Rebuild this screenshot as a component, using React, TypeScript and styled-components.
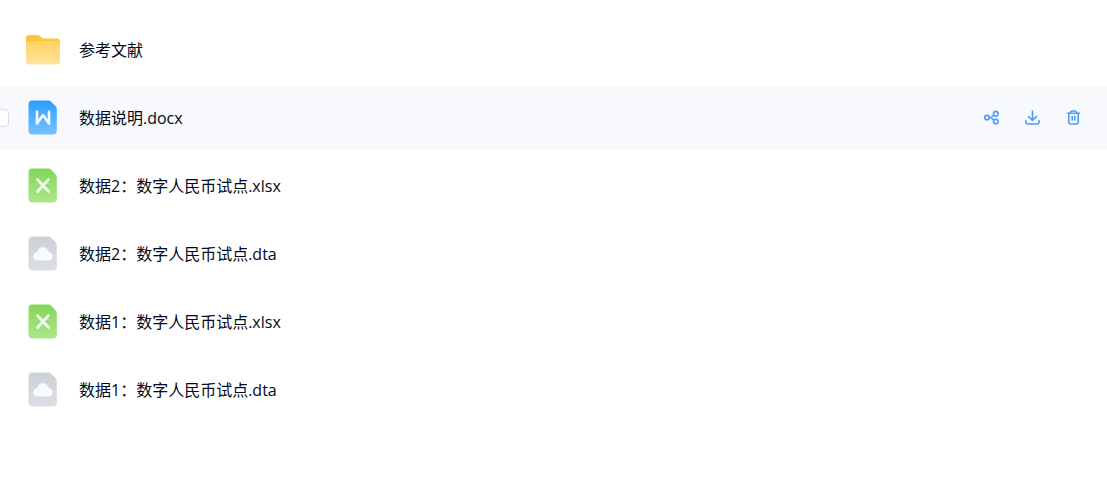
import React from "react";
import styled, { createGlobalStyle } from "styled-components";

const GlobalStyle = createGlobalStyle`
  *, *::before, *::after { box-sizing: border-box; }
  body {
    margin: 0;
    background: #fff;
    color: #03081a;
    overflow-x: hidden;
    font-family: "Open Sans", "Noto Sans CJK SC", sans-serif;
    font-size: 16px;
    line-height: 24px;
  }
`;

const FileList = styled.ul`
  display: flex;
  flex-direction: column;
  gap: 4px;
  margin: 0;
  padding: 18px 0;
  list-style: none;
  overflow: hidden;
`;

const Row = styled.li<{ $active: boolean }>`
  display: flex;
  align-items: center;
  height: 64px;
  padding-right: 24px;
  background: ${(p) => (p.$active ? "#f7f9fd" : "transparent")};
`;

const Tick = styled.input<{ $shown: boolean }>`
  appearance: none;
  flex: none;
  width: 18px;
  height: 18px;
  margin: 0 17px 0 -9px;
  border: 1px solid #dcdfe5;
  border-radius: 4px;
  background: #fff;
  visibility: ${(p) => (p.$shown ? "visible" : "hidden")};
`;

const Entry = styled.label`
  display: flex;
  flex: 1;
  align-items: center;
  gap: 19px;
  min-width: 0;
`;

const FileIcon = styled.svg`
  flex: none;
  display: block;
  width: 34px;
  height: 36px;
`;

const Name = styled.span`
  overflow: hidden;
  white-space: nowrap;
  text-overflow: ellipsis;
`;

const Actions = styled.div`
  display: flex;
  gap: 23px;
`;

const ActionButton = styled.button`
  width: 18px;
  height: 18px;
  padding: 0;
  border: 0;
  background: none;
  color: #4a9bfa;
  cursor: pointer;

  svg {
    display: block;
    width: 18px;
    height: 18px;
    fill: none;
    stroke: currentColor;
    stroke-width: 1.6;
    stroke-linecap: round;
    stroke-linejoin: round;
  }
`;

type Kind = "folder" | "docx" | "xlsx" | "dta";

const gradients: Record<Kind, [string, string]> = {
  folder: ["#ffd162", "#ffe49c"],
  docx: ["#2a9fff", "#78c1ff"],
  xlsx: ["#82d658", "#ade68c"],
  dta: ["#cdd1d8", "#dcdfe4"],
};

function KindIcon({ kind }: { kind: Kind }) {
  const id = React.useId();
  const [top, bottom] = gradients[kind];
  return (
    <FileIcon viewBox="0 0 34 36" aria-hidden="true">
      <defs>
        <linearGradient id={id} x1="0" y1="0" x2="0" y2="1">
          <stop offset="0" stopColor={top} />
          <stop offset="1" stopColor={bottom} />
        </linearGradient>
      </defs>
      {kind === "folder" ? (
        <>
          <path
            d="M0 16V6a3 3 0 0 1 3-3h8.500c1 0 1.800.3 2.500 1l1.600 1.500c.7.600 1.500 1 2.500 1H31a3 3 0 0 1 3 3V16Z"
            fill="#ffc53a"
          />
          <path
            d="M0 12a3 3 0 0 1 3-3h28a3 3 0 0 1 3 3v17.500a3 3 0 0 1-3 3H3a3 3 0 0 1-3-3Z"
            fill={`url(#${id})`}
          />
        </>
      ) : (
        <path
          d="M6.500.500h15.800c1.100 0 2.100.4 2.800 1.200l4.500 4.600c.8.800 1.200 1.700 1.200 2.800V30.500a4 4 0 0 1-4 4H6.500a4 4 0 0 1-4-4V4.500a4 4 0 0 1 4-4Z"
          fill={`url(#${id})`}
        />
      )}
      {kind === "docx" && (
        <path
          d="M11 11.800v11.700l6-8.500 6 8.500V11.800"
          fill="none"
          stroke="#fff"
          strokeOpacity=".94"
          strokeWidth="2.600"
          strokeLinecap="round"
          strokeLinejoin="round"
        />
      )}
      {kind === "xlsx" && (
        <path
          d="M11.500 11.500l11 12M22.500 11.500l-11 12"
          fill="none"
          stroke="#fff"
          strokeOpacity=".88"
          strokeWidth="2.800"
          strokeLinecap="round"
        />
      )}
      {kind === "dta" && (
        <path
          d="M11.800 24.500a4.300 4.300 0 0 1-.4-8.600 5.700 5.700 0 0 1 11.200 0 4.300 4.300 0 0 1-.4 8.600Z"
          fill="#f9fafb"
        />
      )}
    </FileIcon>
  );
}

const ShareIcon = () => (
  <svg viewBox="0 0 18 18" aria-hidden="true">
    <circle cx="4" cy="8.500" r="2.300" />
    <circle cx="12.800" cy="4.700" r="2.300" />
    <circle cx="12.800" cy="12.500" r="2.300" />
    <path d="M6.300 8.500h1.700l2.800-2.300M8 8.500l2.800 2.500" />
  </svg>
);

const DownloadIcon = () => (
  <svg viewBox="0 0 18 18" aria-hidden="true">
    <path d="M8.500 2v9M4.500 7.500l4 4 4-4M2 11.500v1.500a2 2 0 0 0 2 2h9a2 2 0 0 0 2-2v-1.500" />
  </svg>
);

const TrashIcon = () => (
  <svg viewBox="0 0 18 18" aria-hidden="true">
    <path d="M2.500 4.300h12M4.800 4.100l.6-1q.6-1.100 1.800-1.100h2.600q1.200 0 1.800 1.100l.6 1M3.800 4.300v8.700a2 2 0 0 0 2 2h5.400a2 2 0 0 0 2-2V4.300M7.200 7.500v3.500M9.800 7.500v3.500" />
  </svg>
);

const files: { name: string; kind: Kind }[] = [
  { name: "参考文献", kind: "folder" },
  { name: "数据说明.docx", kind: "docx" },
  { name: "数据2：数字人民币试点.xlsx", kind: "xlsx" },
  { name: "数据2：数字人民币试点.dta", kind: "dta" },
  { name: "数据1：数字人民币试点.xlsx", kind: "xlsx" },
  { name: "数据1：数字人民币试点.dta", kind: "dta" },
];

export default function App() {
  const activeIndex = 1;
  return (
    <>
      <GlobalStyle />
      <FileList lang="zh-CN">
        {files.map((file, i) => (
          <Row key={file.name} $active={i === activeIndex}>
            <Tick type="checkbox" id={`file-${i}`} $shown={i === activeIndex} />
            <Entry htmlFor={`file-${i}`}>
              <KindIcon kind={file.kind} />
              <Name>{file.name}</Name>
            </Entry>
            {i === activeIndex && (
              <Actions>
                <ActionButton type="button" aria-label="分享">
                  <ShareIcon />
                </ActionButton>
                <ActionButton type="button" aria-label="下载">
                  <DownloadIcon />
                </ActionButton>
                <ActionButton type="button" aria-label="删除">
                  <TrashIcon />
                </ActionButton>
              </Actions>
            )}
          </Row>
        ))}
      </FileList>
    </>
  );
}
